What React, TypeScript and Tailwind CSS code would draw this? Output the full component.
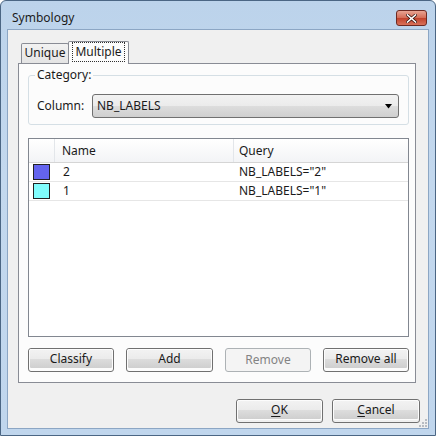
import React from "react";

const font = { fontFamily: '"Noto Sans", "Open Sans", sans-serif' };

function WinButton({ label, width, disabled, underline }: { label: string; width: string; disabled?: boolean; underline?: boolean }) {
  if (disabled) {
    return (
      <div className={`${width} h-[24px] rounded-[3px] border border-[#adb2b5] bg-[#f4f4f4] flex items-center justify-center text-[#838383]`}>
        {label}
      </div>
    );
  }
  return (
    <div className={`${width} h-[24px] rounded-[3px] border border-[#707070] p-px`}>
      <div className="h-full rounded-[2px] border border-[#fcfcfc] bg-[linear-gradient(#f2f2f2_0%,#ebebeb_50%,#dddddd_50%,#cfcfcf_100%)] flex items-center justify-center text-[#1a1a1a] -m-px">
        {underline ? (
          <span>
            <span className="underline underline-offset-2">{label[0]}</span>
            {label.slice(1)}
          </span>
        ) : (
          label
        )}
      </div>
    </div>
  );
}

const rows = [
  { name: "2", query: 'NB_LABELS="2"', color: "bg-[#6464ee]" },
  { name: "1", query: 'NB_LABELS="1"', color: "bg-[#80fcfc]" },
];

export default function App() {
  return (
    <div className="w-[436px] h-[436px] text-[12px] leading-none" style={font}>
      <div className="w-full h-full rounded-t-[6px] border border-[#4b6684] bg-[linear-gradient(#bcd3eb,#c3d8ee_40%,#c0d6ed)] flex flex-col">
        {/* title bar */}
        <div className="h-[28px] shrink-0 flex items-start justify-between pl-[11px] pr-[8px] pt-[9px]">
          <span className="text-[#1c1c1c] text-[12px] mt-[2px]">Symbology</span>
          <div className="w-[31px] h-[16px] rounded-[3px] border border-[#6e2a22] bg-[linear-gradient(#e8a493,#d46b55_50%,#c0402a_50%,#d9725a)] flex items-center justify-center">
            <svg width="11" height="9" viewBox="0 0 11 9">
              <path d="M1.5 1 L9.5 8 M9.5 1 L1.5 8" stroke="#3a1510" strokeWidth="3" strokeLinecap="square" />
              <path d="M1.5 1 L9.5 8 M9.5 1 L1.5 8" stroke="#ffffff" strokeWidth="1.6" strokeLinecap="square" />
            </svg>
          </div>
        </div>

        {/* client area */}
        <div className="flex-1 mx-[6px] mb-[6px] border border-[#8ca6c4] bg-[#f0f0f0] flex flex-col pt-[10px] pl-[10px] relative">
          {/* tabs */}
          <div className="flex items-end h-[23px] relative z-10">
            <div className="ml-[3px] w-[48px] h-[20px] border border-b-0 border-[#898c95] rounded-t-[2px] bg-[linear-gradient(#f2f2f2,#e4e4e4)] flex items-center justify-center text-[#1a1a1a] pb-px">
              Unique
            </div>
            <div className="-ml-px w-[61px] h-[23px] border border-b-0 border-[#898c95] rounded-t-[2px] bg-[#fcfcfc] flex items-center justify-center pb-[2px] -mb-px">
              <span className="border border-dotted border-[#303030] px-[2px] py-[3px] text-[#1a1a1a]">Multiple</span>
            </div>
          </div>

          {/* tab panel */}
          <div className="w-[398px] h-[320px] border border-[#898c95] bg-[#fcfcfc] pt-[11px] pl-[9px] flex flex-col">
            {/* group box */}
            <div className="relative w-[381px] h-[50px] rounded-[3px] border border-[#d5dfe5] flex items-end pb-[6px] pl-[8px]">
              <span className="absolute left-[6px] -top-[7px] bg-[#fcfcfc] px-[2px] text-[#1a1a1a]">Category:</span>
              <span className="w-[55px] text-[#1a1a1a] mb-[6px]">Column:</span>
              <div className="w-[307px] h-[24px] rounded-[3px] border border-[#707070] bg-[linear-gradient(#f2f2f2_0%,#ebebeb_50%,#dddddd_50%,#cfcfcf_100%)] flex items-center justify-between pl-[4px] pr-[5px]">
                <span className="text-[#1a1a1a]">NB_LABELS</span>
                <svg width="8" height="5" viewBox="0 0 8 5">
                  <path d="M0 0 H7 L3.5 4.5 Z" fill="#000" />
                </svg>
              </div>
            </div>

            {/* list */}
            <div className="mt-[13px] w-[381px] h-[199px] border border-[#828790] bg-white flex flex-col">
              <div className="h-[24px] shrink-0 flex border-b border-[#d5d5d5] bg-[linear-gradient(#ffffff,#f3f4f6)] text-[#1a1a1a]">
                <div className="w-[26px] border-r border-[#e3e6ea]" />
                <div className="w-[179px] border-r border-[#e3e6ea] flex items-center pl-[7px]">Name</div>
                <div className="flex-1 flex items-center pl-[5px]">Query</div>
              </div>
              {rows.map((r) => (
                <div key={r.name} className="h-[19px] shrink-0 flex border-b border-[#e6e6e6] text-[#1a1a1a]">
                  <div className="w-[26px] flex items-center pl-[4px]">
                    <div className={`w-[17px] h-[16px] border border-[#222] ${r.color}`} />
                  </div>
                  <div className="w-[179px] flex items-center pl-[8px]">{r.name}</div>
                  <div className="flex-1 flex items-center pl-[5px]">{r.query}</div>
                </div>
              ))}
            </div>

            {/* buttons */}
            <div className="mt-[11px] w-[381px] flex justify-between">
              <WinButton label="Classify" width="w-[86px]" />
              <WinButton label="Add" width="w-[87px]" />
              <WinButton label="Remove" width="w-[86px]" disabled />
              <WinButton label="Remove all" width="w-[86px]" />
            </div>
          </div>

          {/* dialog buttons */}
          <div className="mt-[16px] flex justify-end gap-[9px] pr-[8px]">
            <WinButton label="OK" width="w-[87px]" underline />
            <WinButton label="Cancel" width="w-[88px]" underline />
          </div>

          {/* size grip */}
          <svg className="absolute right-[1px] bottom-[1px]" width="8" height="8" viewBox="0 0 8 8">
            {[
              [6, 0], [6, 3], [3, 3], [6, 6], [3, 6], [0, 6],
            ].map(([x, y], i) => (
              <rect key={i} x={x} y={y} width="2" height="2" fill="#b8bcc2" />
            ))}
          </svg>
        </div>
      </div>
    </div>
  );
}
